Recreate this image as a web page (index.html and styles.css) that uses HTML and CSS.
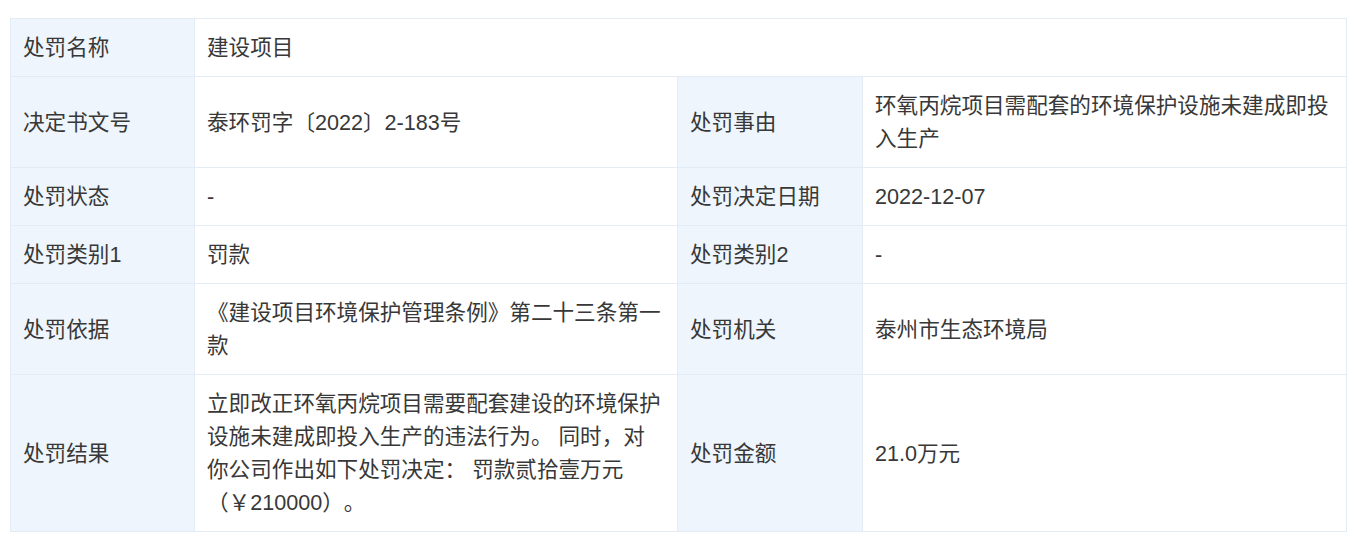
FILE: index.html
```html
<!DOCTYPE html>
<html lang="zh-CN">
<head>
<meta charset="utf-8">
<title>处罚信息</title>
<link rel="stylesheet" href="styles.css">
</head>
<body>
<div class="page">
  <table class="info">
    <colgroup>
      <col class="c-label1">
      <col class="c-value1">
      <col class="c-label2">
      <col class="c-value2">
    </colgroup>
    <tbody>
      <tr>
        <td class="label">处罚名称</td>
        <td class="value" colspan="3">建设项目</td>
      </tr>
      <tr>
        <td class="label">决定书文号</td>
        <td class="value">泰环罚字〔2022〕2-183号</td>
        <td class="label">处罚事由</td>
        <td class="value">环氧丙烷项目需配套的环境保护设施未建成即投入生产</td>
      </tr>
      <tr>
        <td class="label">处罚状态</td>
        <td class="value">-</td>
        <td class="label">处罚决定日期</td>
        <td class="value">2022-12-07</td>
      </tr>
      <tr>
        <td class="label">处罚类别1</td>
        <td class="value">罚款</td>
        <td class="label">处罚类别2</td>
        <td class="value">-</td>
      </tr>
      <tr>
        <td class="label">处罚依据</td>
        <td class="value">《建设项目环境保护管理条例》第二十三条第一款</td>
        <td class="label">处罚机关</td>
        <td class="value">泰州市生态环境局</td>
      </tr>
      <tr>
        <td class="label">处罚结果</td>
        <td class="value">立即改正环氧丙烷项目需要配套建设的环境保护设施未建成即投入生产的违法行为。 同时，对你公司作出如下处罚决定： 罚款贰拾壹万元（￥210000）。</td>
        <td class="label">处罚金额</td>
        <td class="value">21.0万元</td>
      </tr>
    </tbody>
  </table>
</div>
</body>
</html>
```

FILE: styles.css
```css
html, body {
  margin: 0;
  padding: 0;
  background: #ffffff;
}

.page {
  padding: 18px 12px 10px 10px;
  font-family: "Liberation Sans", Arial, "Noto Sans CJK SC", sans-serif;
  color: #383838;
}

.info {
  width: 1336px;
  border-collapse: collapse;
  table-layout: fixed;
  font-size: 21.6px;
  line-height: 33px;
  text-spacing-trim: space-all;
}

.c-label1 { width: 184px; }
.c-value1 { width: 483px; }
.c-label2 { width: 185px; }
.c-value2 { width: 484px; }

.info td {
  border: 1px solid #e3ebf4;
  padding: 12px 12px;
  vertical-align: middle;
  text-align: left;
}

.info td.label {
  background: #eef5fc;
}

.info td.value {
  background: #ffffff;
}
```
